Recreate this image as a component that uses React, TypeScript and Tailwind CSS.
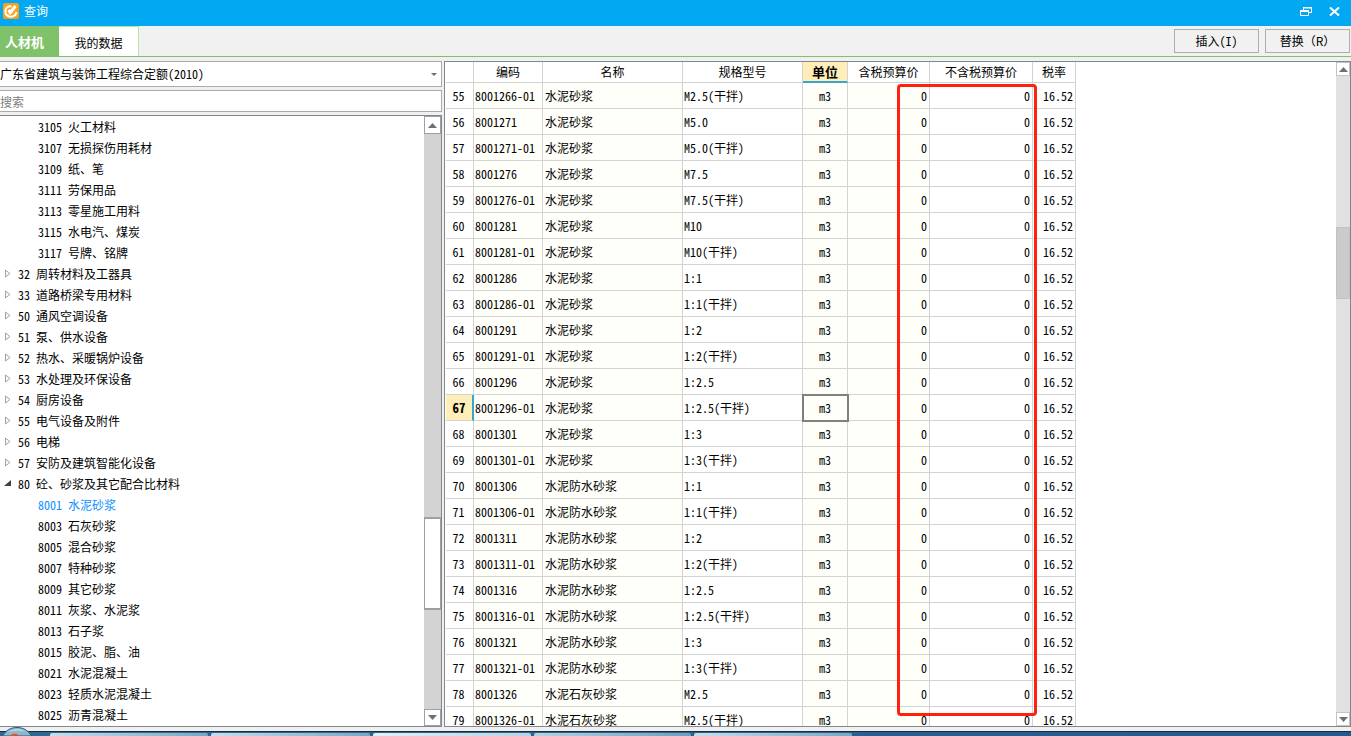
import React, { useState } from 'react';

interface TreeNode {
    code: string;
    name: string;
    level: 1 | 2;
    open?: boolean;
}

interface Material {
    no: number;
    code: string;
    name: string;
    spec: string;
}

const treeNodes: TreeNode[] = [
    { code: '3105', name: '火工材料', level: 2 },
    { code: '3107', name: '无损探伤用耗材', level: 2 },
    { code: '3109', name: '纸、笔', level: 2 },
    { code: '3111', name: '劳保用品', level: 2 },
    { code: '3113', name: '零星施工用料', level: 2 },
    { code: '3115', name: '水电汽、煤炭', level: 2 },
    { code: '3117', name: '号牌、铭牌', level: 2 },
    { code: '32', name: '周转材料及工器具', level: 1 },
    { code: '33', name: '道路桥梁专用材料', level: 1 },
    { code: '50', name: '通风空调设备', level: 1 },
    { code: '51', name: '泵、供水设备', level: 1 },
    { code: '52', name: '热水、采暖锅炉设备', level: 1 },
    { code: '53', name: '水处理及环保设备', level: 1 },
    { code: '54', name: '厨房设备', level: 1 },
    { code: '55', name: '电气设备及附件', level: 1 },
    { code: '56', name: '电梯', level: 1 },
    { code: '57', name: '安防及建筑智能化设备', level: 1 },
    { code: '80', name: '砼、砂浆及其它配合比材料', level: 1, open: true },
    { code: '8001', name: '水泥砂浆', level: 2 },
    { code: '8003', name: '石灰砂浆', level: 2 },
    { code: '8005', name: '混合砂浆', level: 2 },
    { code: '8007', name: '特种砂浆', level: 2 },
    { code: '8009', name: '其它砂浆', level: 2 },
    { code: '8011', name: '灰浆、水泥浆', level: 2 },
    { code: '8013', name: '石子浆', level: 2 },
    { code: '8015', name: '胶泥、脂、油', level: 2 },
    { code: '8021', name: '水泥混凝土', level: 2 },
    { code: '8023', name: '轻质水泥混凝土', level: 2 },
    { code: '8025', name: '沥青混凝土', level: 2 }
];

const materials: Material[] = [
    { no: 55, code: '8001266-01', name: '水泥砂浆', spec: 'M2.5(干拌)' },
    { no: 56, code: '8001271', name: '水泥砂浆', spec: 'M5.0' },
    { no: 57, code: '8001271-01', name: '水泥砂浆', spec: 'M5.0(干拌)' },
    { no: 58, code: '8001276', name: '水泥砂浆', spec: 'M7.5' },
    { no: 59, code: '8001276-01', name: '水泥砂浆', spec: 'M7.5(干拌)' },
    { no: 60, code: '8001281', name: '水泥砂浆', spec: 'M10' },
    { no: 61, code: '8001281-01', name: '水泥砂浆', spec: 'M10(干拌)' },
    { no: 62, code: '8001286', name: '水泥砂浆', spec: '1:1' },
    { no: 63, code: '8001286-01', name: '水泥砂浆', spec: '1:1(干拌)' },
    { no: 64, code: '8001291', name: '水泥砂浆', spec: '1:2' },
    { no: 65, code: '8001291-01', name: '水泥砂浆', spec: '1:2(干拌)' },
    { no: 66, code: '8001296', name: '水泥砂浆', spec: '1:2.5' },
    { no: 67, code: '8001296-01', name: '水泥砂浆', spec: '1:2.5(干拌)' },
    { no: 68, code: '8001301', name: '水泥砂浆', spec: '1:3' },
    { no: 69, code: '8001301-01', name: '水泥砂浆', spec: '1:3(干拌)' },
    { no: 70, code: '8001306', name: '水泥防水砂浆', spec: '1:1' },
    { no: 71, code: '8001306-01', name: '水泥防水砂浆', spec: '1:1(干拌)' },
    { no: 72, code: '8001311', name: '水泥防水砂浆', spec: '1:2' },
    { no: 73, code: '8001311-01', name: '水泥防水砂浆', spec: '1:2(干拌)' },
    { no: 74, code: '8001316', name: '水泥防水砂浆', spec: '1:2.5' },
    { no: 75, code: '8001316-01', name: '水泥防水砂浆', spec: '1:2.5(干拌)' },
    { no: 76, code: '8001321', name: '水泥防水砂浆', spec: '1:3' },
    { no: 77, code: '8001321-01', name: '水泥防水砂浆', spec: '1:3(干拌)' },
    { no: 78, code: '8001326', name: '水泥石灰砂浆', spec: 'M2.5' },
    { no: 79, code: '8001326-01', name: '水泥石灰砂浆', spec: 'M2.5(干拌)' }
];

const Arrow: React.FC<{ up?: boolean }> = ({ up }) => (
    <svg width="9" height="5" viewBox="0 0 9 5" aria-hidden="true">
        <path d={up ? 'M4.5 0 9 5H0Z' : 'M0 0h9L4.5 5Z'} fill="#6b6f80" />
    </svg>
);

const TitleBar = () => (
    <header className="flex h-[26px] shrink-0 items-center bg-[#02a9f2] pb-1 pl-[3px] pr-[11px] text-white">
        <svg width="16" height="16" viewBox="0 0 16 16" fill="none" aria-hidden="true">
            <rect width="16" height="16" rx="2" fill="#f9a11b" />
            <path d="M8.500 3.500Q5 2.500 3 5.500Q1.500 9 3.500 12Q6 14.500 9.500 13.500Q13 12.500 13.500 9" stroke="#fff" strokeWidth="2" />
            <path d="M5.500 7 7.500 9.500 12.500 3" stroke="#fff" strokeWidth="3" />
            <path d="M5.500 11 7.500 10.500" stroke="#fff" />
        </svg>
        <h1 className="ml-[5px] grow">查询</h1>
        <button type="button" aria-label="还原" className="flex h-4 w-3 items-center justify-center">
            <svg width="12" height="9" viewBox="0 0 12 9" fill="none" stroke="#fff">
                <path d="M3.5 3V.5h8v5H9" />
                <path d="M3 .5h9" strokeWidth="2" />
                <path d="M.5 3.5h8v5h-8Z" />
                <path d="M0 4h9" strokeWidth="2" />
            </svg>
        </button>
        <button type="button" aria-label="关闭" className="ml-[17px] flex h-4 w-[11px] items-center justify-center">
            <svg width="11" height="9" viewBox="0 0 11 9" stroke="#fff" strokeWidth="2">
                <path d="M1 .5 10 8.5M10 .5 1 8.5" />
            </svg>
        </button>
    </header>
);

const Toolbar = () => (
    <div className="flex h-[31px] shrink-0 items-stretch border-b border-[#7cc36b] bg-[#f1f1f1]">
        <button type="button" className="w-[59px] bg-[#80c269] pr-2.5 pt-0.5 text-[13px] font-bold text-white">
            人材机
        </button>
        <button type="button" className="w-20 border-r border-t border-[#b5e8a0] bg-white pt-0.5">
            我的数据
        </button>
        <div className="flex grow justify-end gap-1.5 py-[3px] pr-px">
            <button type="button" className="w-[85px] border border-[#adadad] bg-[#f1f1f1]">
                插入(I)
            </button>
            <button type="button" className="w-[85px] border border-[#adadad] bg-[#f1f1f1] [font-feature-settings:normal]">
                替换（R）
            </button>
        </div>
    </div>
);

const TreePanel = () => {
    const [selected, setSelected] = useState('8001');

    return (
        <aside className="flex w-[442px] shrink-0 flex-col">
            <div className="relative h-[26px] shrink-0 border-y border-r border-[#ababab] bg-white">
                <select aria-label="定额库" className="h-full w-full appearance-none bg-transparent">
                    <option>广东省建筑与装饰工程综合定额(2010)</option>
                </select>
                <svg className="pointer-events-none absolute right-1 top-[11px]" width="6" height="3" viewBox="0 0 6 3">
                    <path d="M0 0h6L3 3Z" fill="#6b6f80" />
                </svg>
            </div>
            <input
                type="text"
                aria-label="搜索"
                placeholder="搜索"
                className="mt-[3px] h-[22px] shrink-0 border-y border-r border-[#ababab] bg-white placeholder:text-[#808080]"
            />
            <div className="mt-[3px] flex min-h-0 grow border-y border-r border-[#828790] bg-white">
                <ul className="min-w-0 grow overflow-hidden">
                    {treeNodes.map((node) => (
                        <li key={node.code}>
                            <button
                                type="button"
                                onClick={() => setSelected(node.code)}
                                className={`flex h-[21px] items-center whitespace-pre ${node.level === 2 ? 'pl-[38px]' : 'pl-1'} ${node.code === selected ? 'text-[#0b8fff]' : ''}`}
                            >
                                {node.level === 1 && (
                                    <svg className="mr-1.5" width="8" height="9" viewBox="0 0 8 9" aria-hidden="true">
                                        {node.open ? (
                                            <path d="M7 1v6H0Z" fill="#404040" />
                                        ) : (
                                            <path d="M1.5 1v7L6 4.5Z" fill="#fff" stroke="#a0a0a0" />
                                        )}
                                    </svg>
                                )}
                                <span>{node.code}</span>
                                <span className="ml-1.5">{node.name}</span>
                            </button>
                        </li>
                    ))}
                </ul>
                <div className="flex w-[17px] shrink-0 flex-col bg-[#d3d3d3]">
                    <button type="button" aria-label="向上滚动" className="flex h-[18px] shrink-0 items-center justify-center border border-[#a0a0a0] bg-white">
                        <Arrow up />
                    </button>
                    <div className="grow-[384]" />
                    <div className="h-[93px] border border-b-2 border-t-2 border-[#a0a0a0] bg-white" />
                    <div className="grow-[99]" />
                    <button type="button" aria-label="向下滚动" className="flex h-[17px] shrink-0 items-center justify-center border border-[#a0a0a0] bg-white">
                        <Arrow />
                    </button>
                </div>
            </div>
        </aside>
    );
};

const MaterialTable = () => {
    const current = 67;
    const head = 'border-b border-r border-[#d3d3d3] p-0 text-center font-normal';
    const cell = 'border-b border-r border-[#d3d3d3] py-0';

    return (
        <section className="ml-0.5 flex min-w-0 grow border border-[#828790] bg-white">
            <div className="relative min-w-0 grow overflow-hidden pl-px">
                <table className="w-[630px] table-fixed border-separate border-spacing-0">
                    <colgroup>
                        <col className="w-[28px]" />
                        <col className="w-[69px]" />
                        <col className="w-[140px]" />
                        <col className="w-[120px]" />
                        <col className="w-[45px]" />
                        <col className="w-[82px]" />
                        <col className="w-[103px]" />
                        <col className="w-[43px]" />
                    </colgroup>
                    <thead>
                        <tr className="h-[21px]">
                            <th className={head} aria-label="序号" />
                            <th className={head}>编码</th>
                            <th className={head}>名称</th>
                            <th className={head}>规格型号</th>
                            <th className="border-b-2 border-r border-b-[#35a5d2] border-r-[#d3d3d3] bg-[#ffeeb8] p-0 text-center text-[13px] font-bold">单位</th>
                            <th className={head}>含税预算价</th>
                            <th className={head}>不含税预算价</th>
                            <th className={head}>税率</th>
                        </tr>
                    </thead>
                    <tbody>
                        {materials.map((item) => (
                            <tr key={item.no} className="h-[26px]">
                                {item.no === current ? (
                                    <td className="border-b border-r-2 border-b-[#d3d3d3] border-r-[#35a5d2] bg-[#ffeeb8] p-0 text-center text-[13px] font-bold">{item.no}</td>
                                ) : (
                                    <td className={`${cell} pr-0.5 text-center`}>{item.no}</td>
                                )}
                                <td className={`${cell} bg-[#fffffa] pl-px`}>{item.code}</td>
                                <td className={`${cell} bg-[#fffffa] pl-0.5`}>{item.name}</td>
                                <td className={`${cell} pl-px`}>{item.spec}</td>
                                <td className={`${cell} bg-[#fffffa] text-center ${item.no === current ? 'outline-2 -outline-offset-1 outline-[#808080]' : ''}`}>m3</td>
                                <td className={`${cell} bg-[#fffffa] pr-0.5 text-right`}>0</td>
                                <td className={`${cell} pr-0.5 text-right`}>0</td>
                                <td className={`${cell} pr-0.5 text-right`}>16.52</td>
                            </tr>
                        ))}
                    </tbody>
                </table>
                {/* Highlight over the two price columns */}
                <div className="pointer-events-none absolute left-[452px] top-[22px] h-[632px] w-[140px] rounded-[4px] border-3 border-[#ff2010]" />
            </div>
            <div className="flex w-3.5 shrink-0 flex-col bg-[#e1e1e1]">
                <button type="button" aria-label="向上滚动" className="flex h-3.5 shrink-0 items-center justify-center border border-[#c4c4c4] bg-white">
                    <Arrow up />
                </button>
                <div className="grow-[151]" />
                <div className="h-[72px] rounded-[1px] border border-[#c2c2c2] bg-[#cbcbcb]" />
                <div className="grow-[413]" />
                <button type="button" aria-label="向下滚动" className="flex h-3.5 shrink-0 items-center justify-center border border-[#c4c4c4] bg-white">
                    <Arrow />
                </button>
            </div>
        </section>
    );
};

const Taskbar = () => (
    <footer className="relative flex h-[5px] shrink-0 gap-[3px] border-t border-[#1c2b38] bg-linear-to-r from-[#2c6a96] to-[#245a92] pl-[50px] pt-px">
        <div className="w-[158px] rounded-t-xs bg-linear-to-r from-[#c5dfeb] to-[#78a8c4]" />
        <div className="w-[159px] rounded-t-xs bg-linear-to-r from-[#c5dfeb] to-[#78a8c4]" />
        <div className="w-[158px] rounded-t-xs bg-linear-to-r from-[#e2f1f6] to-[#b5d4e2]" />
        <div className="w-[157px] rounded-t-xs bg-linear-to-r from-[#b5d4e2] to-[#6d9fbd]" />
        <div className="w-[158px] rounded-t-xs bg-linear-to-r from-[#c5dfeb] to-[#78a8c4]" />
        <svg className="absolute bottom-0 left-0.5" width="30" height="9" viewBox="0 0 30 9" aria-hidden="true">
            <path d="M.5 9C4 3 9 .5 15 .5S26 3 29.500 9Z" fill="#8fb7cc" stroke="#2b5b7e" />
            <path d="M6 5Q15-1 24 5Q15 2 6 5Z" fill="#c6dde8" />
            <path d="M8 9Q11 5.500 16 7.500V9Z" fill="#d9532c" />
        </svg>
    </footer>
);

export default function App() {
    return (
        <div className="flex h-screen flex-col overflow-hidden bg-[#f0f0f0] font-['Noto_Sans_CJK_SC',sans-serif] text-xs leading-4 text-black [font-feature-settings:'hwid']">
            <TitleBar />
            <Toolbar />
            <main className="mb-1 mt-1 flex min-h-0 grow">
                <TreePanel />
                <MaterialTable />
            </main>
            <Taskbar />
        </div>
    );
}
